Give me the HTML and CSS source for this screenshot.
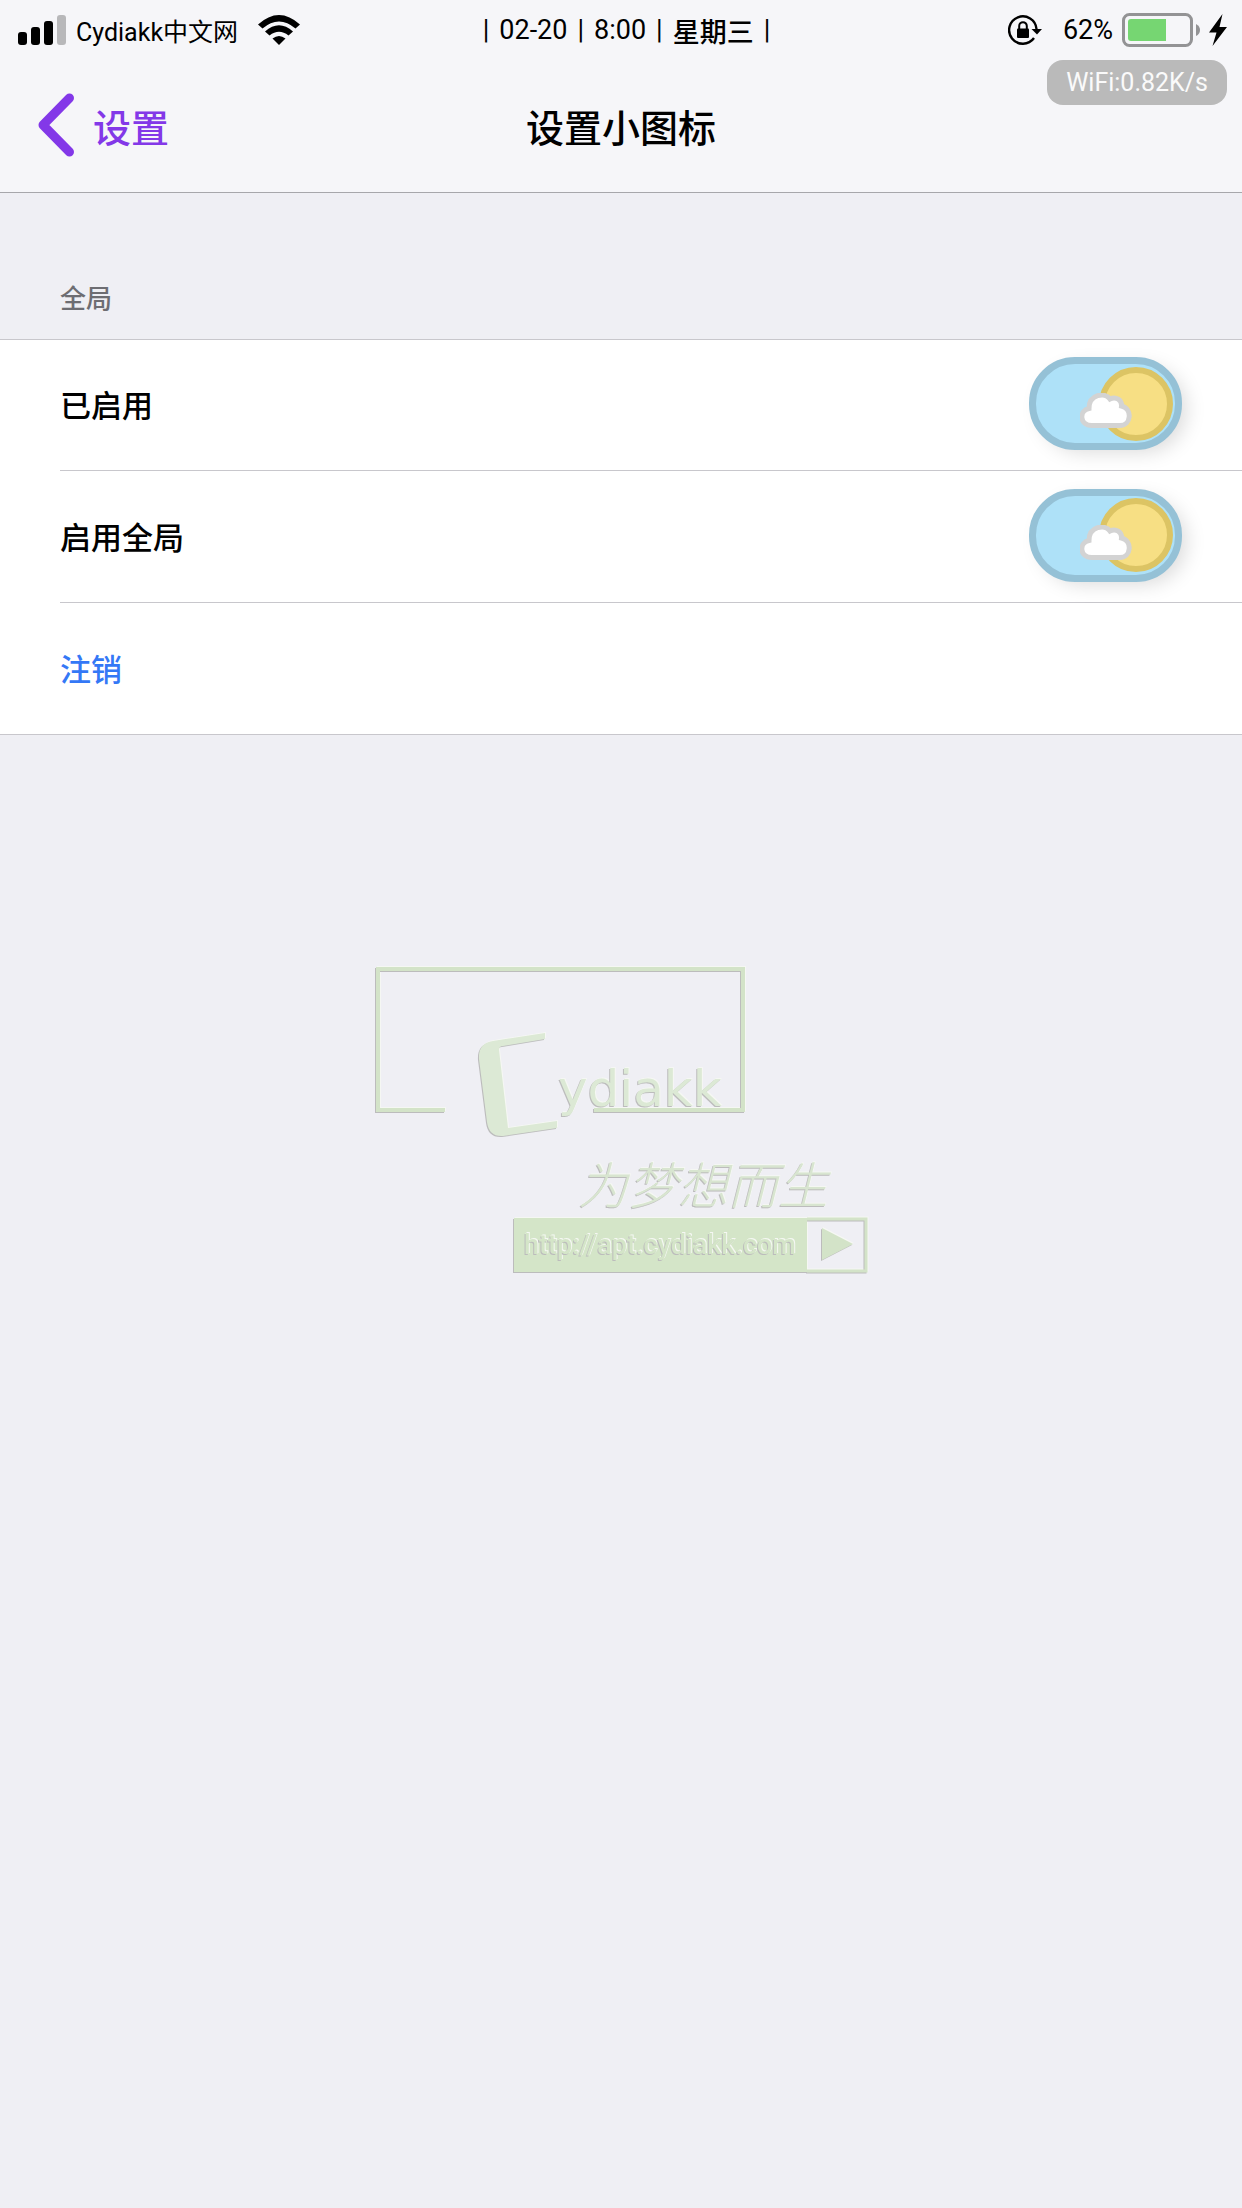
FILE: index.html
```
<!DOCTYPE html>
<html lang="zh-CN">
<head>
    <meta charset="UTF-8">
    <meta name="viewport" content="width=device-width, initial-scale=1.0">
    <title>设置小图标</title>
    <link rel="stylesheet" href="styles.css">
</head>
<body>
    <header class="header">
        <div class="status">
            <div class="status-left">
                <svg class="signal" width="48" height="30" viewBox="0 0 48 30">
                    <rect x="0" y="17" width="9" height="13" rx="3"/>
                    <rect x="13" y="12" width="9" height="18" rx="3"/>
                    <rect x="26" y="6" width="9" height="24" rx="3"/>
                    <rect x="39" y="0" width="9" height="30" rx="3" fill="#b8b8ba"/>
                </svg>
                <span class="carrier">Cydiakk中文网</span>
                <svg width="42" height="30" viewBox="0 0 42 30">
                    <path d="M0 9.500Q21 -9.500 42 9.500L37.500 13.500Q21 -0.500 4.500 13.500Z"/>
                    <path d="M7 16.500Q21 4 35 16.500L30.500 20.500Q21 13 11.500 20.500Z"/>
                    <path d="M14.500 23.500Q21 18.500 27.500 23.500L21 30Z"/>
                </svg>
            </div>
            <div class="clock">
                <span>|</span><span>02-20</span><span>|</span><span>8:00</span><span>|</span><span class="day">星期三</span><span>|</span>
            </div>
            <div class="status-right">
                <svg width="34" height="30" viewBox="0 0 34 30">
                    <path d="M28.500 14A13.700 13.700 0 1 0 26 23" fill="none" stroke="#000" stroke-width="2.400"/>
                    <path d="M23.500 14H34L29 19.500Z"/>
                    <rect x="9" y="13.500" width="12" height="9.500" rx="1"/>
                    <path d="M11.200 14V11A3.800 3.800 0 0 1 18.800 11V14" fill="none" stroke="#000" stroke-width="2"/>
                </svg>
                <span class="percent">62%</span>
                <svg width="78" height="34" viewBox="0 0 78 34">
                    <rect x="1.500" y="1.500" width="68" height="31" rx="6" fill="none" stroke="#939395" stroke-width="3"/>
                    <path d="M9 6H44V28H9Q6 28 6 25V9Q6 6 9 6Z" fill="#76d672"/>
                    <path d="M74 11Q78 13 78 17Q78 21 74 23Z" fill="#939395"/>
                </svg>
                <svg class="bolt" width="18" height="32" viewBox="0 0 18 32">
                    <path d="M13.500 0L0 18.500H7.500L3.500 32L18 13H10.500Z"/>
                </svg>
            </div>
        </div>
        <span class="speed">WiFi:0.82K/s</span>
        <nav class="nav">
            <a class="back" href="#">
                <svg width="38" height="64" viewBox="0 0 38 64">
                    <path d="M32.500 5L6 32L32.500 59" fill="none" stroke="#8338e8" stroke-width="9" stroke-linecap="round" stroke-linejoin="round"/>
                </svg>
                设置
            </a>
            <h1>设置小图标</h1>
        </nav>
    </header>

    <main>
        <h2>全局</h2>
        <ul class="list">
            <li class="row">
                <label for="enabled">已启用</label>
                <span class="switch">
                    <input type="checkbox" id="enabled" checked>
                    <svg class="cloud" width="52" height="36" viewBox="0 0 52 36">
                        <path d="M12 32.500C-1 32.500 -1 17.500 9 15.500C9 1 25 -1 30 6C36 3 42 7 41.500 13C53 16 51 32.500 40 32.500Z" fill="#fff" stroke="#d3d3d3" stroke-width="5"/>
                    </svg>
                </span>
            </li>
            <li class="row">
                <label for="global">启用全局</label>
                <span class="switch">
                    <input type="checkbox" id="global" checked>
                    <svg class="cloud" width="52" height="36" viewBox="0 0 52 36">
                        <path d="M12 32.500C-1 32.500 -1 17.500 9 15.500C9 1 25 -1 30 6C36 3 42 7 41.500 13C53 16 51 32.500 40 32.500Z" fill="#fff" stroke="#d3d3d3" stroke-width="5"/>
                    </svg>
                </span>
            </li>
            <li class="row">
                <button type="button">注销</button>
            </li>
        </ul>

        <svg class="logo" width="500" height="320" viewBox="0 0 500 320">
            <g class="emboss">
                <path d="M74 151H7V10H372V151H223" fill="none" stroke="#d3e3c8" stroke-width="4"/>
                <path d="M174 74V80L132 87Q128 87 128 91L137 169L186 162V169L132 177Q118 178 116 163L108 100Q107 84 122 82Z" fill="#dce9d5"/>
                <text class="brand" x="187" y="147">ydiakk</text>
                <text class="slogan" x="207" y="245">为梦想而生</text>
                <path d="M143 259H436V313H143Z" fill="#d4e5c8"/>
                <path d="M436 260H495V312H436" fill="none" stroke="#d3e3c8" stroke-width="3"/>
                <path d="M451 269L482 285L451 301Z" fill="#d3e3c8"/>
            </g>
            <a class="emboss" href="#"><text class="url" x="153" y="295">http://apt.cydiakk.com</text></a>
        </svg>
    </main>
</body>
</html>
```
FILE: styles.css
```
*, *::before {
    box-sizing: border-box;
}
body {
    margin: 0;
    background-color: #efeff4;
    color: #000;
    font-family: Roboto, "Noto Sans CJK SC", sans-serif;
    font-size: 31px;
    font-weight: 500;
}
svg {
    display: block;
    flex-shrink: 0;
}
.header {
    position: relative;
    background-color: #f6f6f9;
    border-bottom: 1px solid #a7a7ab;
}
.status {
    display: grid;
    grid-template-columns: 1fr auto 1fr;
    align-items: center;
    height: 60px;
    padding: 0 15px 0 18px;
    font-size: 27px;
    font-weight: 400;
    white-space: nowrap;
}
.status-left, .status-right, .clock {
    display: flex;
    align-items: center;
}
.status-left {
    gap: 10px;
}
.carrier {
    font-size: 25px;
    margin-right: 10px;
}
.clock {
    gap: 10px;
    padding-left: 8px;
}
.day {
    font-weight: 500;
}
.status-right {
    justify-content: flex-end;
    gap: 9px;
}
.percent {
    margin-left: 12px;
}
.speed {
    position: absolute;
    top: 60px;
    right: 15px;
    padding: 0 19px;
    border-radius: 16px;
    background-color: #bababa;
    color: #fafafa;
    font-size: 25px;
    font-weight: 400;
    line-height: 45px;
}
.nav {
    display: grid;
    grid-template-columns: 1fr auto 1fr;
    align-items: center;
    height: 132px;
    padding: 0 37px 2px;
}
.back {
    display: flex;
    align-items: center;
    gap: 18px;
    color: #8338e8;
    font-size: 38px;
    text-decoration: none;
}
h1 {
    margin: 0;
    font-size: 38px;
    font-weight: 500;
}
h2 {
    margin: 0;
    padding: 86px 60px 20px;
    color: #6d6d72;
    font-size: 26px;
    font-weight: 500;
    line-height: 40px;
}
.list {
    margin: 0;
    padding: 0 0 0 60px;
    list-style: none;
    background-color: #fff;
    border-top: 1px solid #c8c7cc;
    border-bottom: 1px solid #c8c7cc;
}
.row {
    display: flex;
    align-items: center;
    justify-content: space-between;
    height: 132px;
    padding: 0 60px 3px 0;
}
.row:first-child {
    height: 130px;
}
.row + .row {
    border-top: 1px solid #c8c7cc;
}
.row button {
    padding: 0;
    border: none;
    background: none;
    color: #3478f6;
    font: inherit;
    cursor: pointer;
}
.switch {
    position: relative;
    width: 153px;
    height: 93px;
}
.switch input {
    appearance: none;
    display: flex;
    align-items: center;
    width: 100%;
    height: 100%;
    margin: 0;
    padding: 2px;
    border: 7px solid #95c1d6;
    border-radius: 46px;
    background-color: #aee1f8;
    box-shadow: 8px 6px 20px -4px rgba(0, 0, 0, 0.15);
}
.switch input::before {
    content: "";
    width: 74px;
    height: 74px;
    border: 6px solid #dcc464;
    border-radius: 50%;
    background-color: #f7df84;
}
.switch input:checked {
    justify-content: flex-end;
}
.cloud {
    position: absolute;
    left: 51px;
    top: 36px;
    pointer-events: none;
}
.logo {
    margin: 224px auto 0;
}
.emboss {
    filter: drop-shadow(-1px 1px 0 #bcbcbc) drop-shadow(1px -1px 0 #f5f7f3);
}
.brand {
    fill: #dce9d5;
    font-family: "DejaVu Sans", sans-serif;
    font-size: 50px;
}
.slogan {
    fill: #d8e5d0;
    font-family: "Noto Sans CJK SC", sans-serif;
    font-size: 50px;
    font-style: italic;
    font-weight: 300;
}
.url {
    fill: #d4e5c8;
    font-size: 27px;
}
```
